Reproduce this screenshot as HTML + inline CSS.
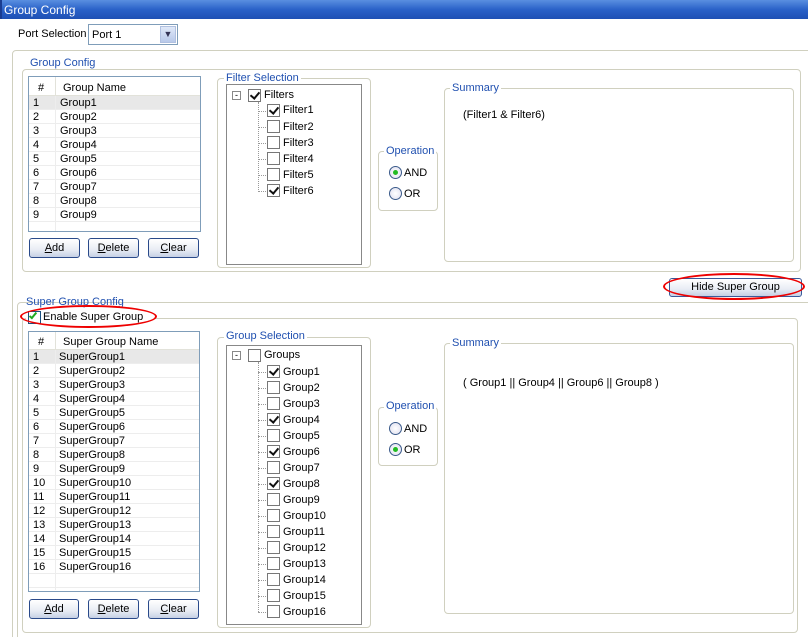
<!DOCTYPE html><html><head><style>
*{box-sizing:border-box;margin:0;padding:0}
html,body{width:808px;height:637px;overflow:hidden}
body{background:#fff;font-family:"Liberation Sans",sans-serif;font-size:11px;color:#000;position:relative}
.a{position:absolute}
.fs{position:absolute;border:1px solid #d0d0bf;border-radius:4px}
.lg{position:absolute;background:#fff;color:#2050b0;padding:0 2px;font-size:11px;line-height:12px}
.tb{position:absolute;border:1px solid #7f9db9;background:#fff;overflow:hidden}
.hd{position:absolute;left:0;right:0;top:0;background:#fff;border-bottom:1px solid #e2e2da}
.row{position:absolute;left:0;right:0;height:14px;line-height:15px;border-bottom:1px solid #ededed}
.row span{position:absolute}
.btn{position:absolute;height:20px;border:1px solid #2a4a8a;border-radius:3px;background:linear-gradient(#fff,#e8ecf4 60%,#c6d0e4);text-align:center;line-height:19px}
.cb{position:absolute;width:13px;height:13px;border:1px solid #777;background:#fff}
.cb.c::after{content:"";position:absolute;left:3px;top:0px;width:4px;height:7px;border:solid #111;border-width:0 2px 2px 0;transform:rotate(40deg)}
.ti{position:absolute;line-height:15px}
.dot{position:absolute;border-left:1px dotted #999}
.hdot{position:absolute;border-top:1px dotted #999;width:8px}
.rd{position:absolute;width:13px;height:13px;border-radius:50%;border:1px solid #3a5a8a;background:radial-gradient(#fff,#dde)}
.rd.s::after{content:"";position:absolute;left:3px;top:3px;width:5px;height:5px;border-radius:50%;background:#2b2}
.ell{position:absolute;border:2px solid #e00;border-radius:50%}
</style></head><body>
<div class="a" style="left:0;top:0;width:808px;height:19px;background:linear-gradient(#5a8fe0,#2a62c8 50%,#1e50b4);border-left:2px solid #1a3c90"></div>
<div class="a" style="left:4px;top:3px;color:#fff;font-size:12px">Group Config</div>
<div class="a" style="left:18px;top:28px">Port Selection</div>
<div class="a" style="left:88px;top:24px;width:90px;height:21px;border:1px solid #7f9db9;background:#fff"><span class="a" style="left:3px;top:4px">Port 1</span><div class="a" style="right:1px;top:1px;width:16px;height:17px;background:linear-gradient(#dfe8f8,#b8c9ea);border:1px solid #b0c0e0;text-align:center;font-size:9px;line-height:15px;color:#335">&#9660;</div></div>

<div class="fs" style="left:12px;top:50px;width:800px;height:600px"></div>
<div class="fs" style="left:22px;top:69px;width:779px;height:203px"></div>
<div class="lg" style="left:28px;top:57px">Group Config</div>

<div class="tb" style="left:28px;top:76px;width:173px;height:156px">
<div class="hd" style="height:19px"><span class="a" style="left:9px;top:5px">#</span><span class="a" style="left:26px;top:0;height:18px;border-left:1px solid #e2e2da"></span><span class="a" style="left:34px;top:5px">Group Name</span></div>
<div class="row" style="top:19px;background:#e8e8e8"><span style="left:4px">1</span><span style="left:31px">Group1</span></div>
<div class="row" style="top:33px"><span style="left:4px">2</span><span style="left:31px">Group2</span></div>
<div class="row" style="top:47px"><span style="left:4px">3</span><span style="left:31px">Group3</span></div>
<div class="row" style="top:61px"><span style="left:4px">4</span><span style="left:31px">Group4</span></div>
<div class="row" style="top:75px"><span style="left:4px">5</span><span style="left:31px">Group5</span></div>
<div class="row" style="top:89px"><span style="left:4px">6</span><span style="left:31px">Group6</span></div>
<div class="row" style="top:103px"><span style="left:4px">7</span><span style="left:31px">Group7</span></div>
<div class="row" style="top:117px"><span style="left:4px">8</span><span style="left:31px">Group8</span></div>
<div class="row" style="top:131px"><span style="left:4px">9</span><span style="left:31px">Group9</span></div>
<div class="a" style="left:26px;top:19px;height:140px;border-left:1px solid #ededed"></div>
</div>
<div class="btn" style="left:29px;top:238px;width:51px"><u>A</u>dd</div>
<div class="btn" style="left:88px;top:238px;width:51px"><u>D</u>elete</div>
<div class="btn" style="left:148px;top:238px;width:51px"><u>C</u>lear</div>

<div class="fs" style="left:217px;top:78px;width:154px;height:190px"></div>
<div class="lg" style="left:224px;top:72px">Filter Selection</div>
<div class="tb" style="left:226px;top:84px;width:136px;height:181px;border-color:#888">
<div class="a" style="left:5px;top:6px;width:9px;height:9px;border:1px solid #888;font-size:9px;line-height:6px;text-align:center">-</div>
<div class="cb c" style="left:21px;top:4px"></div><div class="ti" style="left:37px;top:3px">Filters</div>
<div class="dot" style="left:31px;top:17px;height:90px"></div>
<div class="hdot" style="left:31px;top:26px"></div><div class="cb c" style="left:40px;top:19px"></div><div class="ti" style="left:56px;top:18px">Filter1</div>
<div class="hdot" style="left:31px;top:42px"></div><div class="cb" style="left:40px;top:35px"></div><div class="ti" style="left:56px;top:35px">Filter2</div>
<div class="hdot" style="left:31px;top:58px"></div><div class="cb" style="left:40px;top:51px"></div><div class="ti" style="left:56px;top:51px">Filter3</div>
<div class="hdot" style="left:31px;top:74px"></div><div class="cb" style="left:40px;top:67px"></div><div class="ti" style="left:56px;top:67px">Filter4</div>
<div class="hdot" style="left:31px;top:90px"></div><div class="cb" style="left:40px;top:83px"></div><div class="ti" style="left:56px;top:83px">Filter5</div>
<div class="hdot" style="left:31px;top:106px"></div><div class="cb c" style="left:40px;top:99px"></div><div class="ti" style="left:56px;top:99px">Filter6</div>
</div>

<div class="fs" style="left:378px;top:151px;width:60px;height:60px"></div>
<div class="lg" style="left:384px;top:145px">Operation</div>
<div class="rd s" style="left:389px;top:166px"></div><div class="a" style="left:404px;top:167px">AND</div>
<div class="rd" style="left:389px;top:187px"></div><div class="a" style="left:404px;top:188px">OR</div>

<div class="fs" style="left:444px;top:88px;width:350px;height:174px"></div>
<div class="lg" style="left:450px;top:82px">Summary</div>
<div class="a" style="left:463px;top:109px">(Filter1 &amp; Filter6)</div>

<div class="btn" style="left:669px;top:278px;width:133px;height:19px;line-height:17px;border-color:#3a5a9a">Hide Super Group</div>
<div class="ell" style="left:663px;top:273px;width:142px;height:27px"></div>

<div class="fs" style="left:17px;top:302px;width:795px;height:340px"></div>
<div class="lg" style="left:24px;top:296px;background:transparent">Super Group Config</div>
<div class="fs" style="left:22px;top:318px;width:776px;height:315px"></div>
<div class="a" style="left:26px;top:308px;width:128px;height:16px;background:#fff"></div>
<div class="a" style="left:28px;top:311px;width:13px;height:13px;border:1px solid #1c5180;background:#fff"></div>
<div class="a" style="left:31px;top:311px;width:4px;height:8px;border:solid #2a2;border-width:0 2px 2px 0;transform:rotate(40deg)"></div>
<div class="a" style="left:43px;top:311px">Enable Super Group</div>
<div class="ell" style="left:20px;top:305px;width:137px;height:23px"></div>

<div class="tb" style="left:28px;top:331px;width:172px;height:261px">
<div class="hd" style="height:18px"><span class="a" style="left:9px;top:4px">#</span><span class="a" style="left:26px;top:0;height:17px;border-left:1px solid #e2e2da"></span><span class="a" style="left:34px;top:4px">Super Group Name</span></div>
<div class="row" style="top:18px;background:#e8e8e8"><span style="left:4px">1</span><span style="left:30px">SuperGroup1</span></div>
<div class="row" style="top:32px"><span style="left:4px">2</span><span style="left:30px">SuperGroup2</span></div>
<div class="row" style="top:46px"><span style="left:4px">3</span><span style="left:30px">SuperGroup3</span></div>
<div class="row" style="top:60px"><span style="left:4px">4</span><span style="left:30px">SuperGroup4</span></div>
<div class="row" style="top:74px"><span style="left:4px">5</span><span style="left:30px">SuperGroup5</span></div>
<div class="row" style="top:88px"><span style="left:4px">6</span><span style="left:30px">SuperGroup6</span></div>
<div class="row" style="top:102px"><span style="left:4px">7</span><span style="left:30px">SuperGroup7</span></div>
<div class="row" style="top:116px"><span style="left:4px">8</span><span style="left:30px">SuperGroup8</span></div>
<div class="row" style="top:130px"><span style="left:4px">9</span><span style="left:30px">SuperGroup9</span></div>
<div class="row" style="top:144px"><span style="left:4px">10</span><span style="left:30px">SuperGroup10</span></div>
<div class="row" style="top:158px"><span style="left:4px">11</span><span style="left:30px">SuperGroup11</span></div>
<div class="row" style="top:172px"><span style="left:4px">12</span><span style="left:30px">SuperGroup12</span></div>
<div class="row" style="top:186px"><span style="left:4px">13</span><span style="left:30px">SuperGroup13</span></div>
<div class="row" style="top:200px"><span style="left:4px">14</span><span style="left:30px">SuperGroup14</span></div>
<div class="row" style="top:214px"><span style="left:4px">15</span><span style="left:30px">SuperGroup15</span></div>
<div class="row" style="top:228px"><span style="left:4px">16</span><span style="left:30px">SuperGroup16</span></div>
<div class="row" style="top:242px"></div>
<div class="a" style="left:26px;top:18px;height:240px;border-left:1px solid #ededed"></div>
</div>
<div class="btn" style="left:29px;top:599px;width:50px"><u>A</u>dd</div>
<div class="btn" style="left:88px;top:599px;width:51px"><u>D</u>elete</div>
<div class="btn" style="left:148px;top:599px;width:51px"><u>C</u>lear</div>

<div class="fs" style="left:217px;top:337px;width:154px;height:291px"></div>
<div class="lg" style="left:224px;top:330px">Group Selection</div>
<div class="tb" style="left:226px;top:345px;width:136px;height:280px;border-color:#888">
<div class="a" style="left:5px;top:5px;width:9px;height:9px;border:1px solid #888;font-size:9px;line-height:6px;text-align:center">-</div>
<div class="cb" style="left:21px;top:3px"></div><div class="ti" style="left:37px;top:2px">Groups</div>
<div class="dot" style="left:31px;top:16px;height:250px"></div>
<div class="hdot" style="left:31px;top:26px"></div><div class="cb c" style="left:40px;top:19px"></div><div class="ti" style="left:56px;top:19px">Group1</div>
<div class="hdot" style="left:31px;top:42px"></div><div class="cb" style="left:40px;top:35px"></div><div class="ti" style="left:56px;top:35px">Group2</div>
<div class="hdot" style="left:31px;top:58px"></div><div class="cb" style="left:40px;top:51px"></div><div class="ti" style="left:56px;top:51px">Group3</div>
<div class="hdot" style="left:31px;top:74px"></div><div class="cb c" style="left:40px;top:67px"></div><div class="ti" style="left:56px;top:67px">Group4</div>
<div class="hdot" style="left:31px;top:90px"></div><div class="cb" style="left:40px;top:83px"></div><div class="ti" style="left:56px;top:83px">Group5</div>
<div class="hdot" style="left:31px;top:106px"></div><div class="cb c" style="left:40px;top:99px"></div><div class="ti" style="left:56px;top:99px">Group6</div>
<div class="hdot" style="left:31px;top:122px"></div><div class="cb" style="left:40px;top:115px"></div><div class="ti" style="left:56px;top:115px">Group7</div>
<div class="hdot" style="left:31px;top:138px"></div><div class="cb c" style="left:40px;top:131px"></div><div class="ti" style="left:56px;top:131px">Group8</div>
<div class="hdot" style="left:31px;top:154px"></div><div class="cb" style="left:40px;top:147px"></div><div class="ti" style="left:56px;top:147px">Group9</div>
<div class="hdot" style="left:31px;top:170px"></div><div class="cb" style="left:40px;top:163px"></div><div class="ti" style="left:56px;top:163px">Group10</div>
<div class="hdot" style="left:31px;top:186px"></div><div class="cb" style="left:40px;top:179px"></div><div class="ti" style="left:56px;top:179px">Group11</div>
<div class="hdot" style="left:31px;top:202px"></div><div class="cb" style="left:40px;top:195px"></div><div class="ti" style="left:56px;top:195px">Group12</div>
<div class="hdot" style="left:31px;top:218px"></div><div class="cb" style="left:40px;top:211px"></div><div class="ti" style="left:56px;top:211px">Group13</div>
<div class="hdot" style="left:31px;top:234px"></div><div class="cb" style="left:40px;top:227px"></div><div class="ti" style="left:56px;top:227px">Group14</div>
<div class="hdot" style="left:31px;top:250px"></div><div class="cb" style="left:40px;top:243px"></div><div class="ti" style="left:56px;top:243px">Group15</div>
<div class="hdot" style="left:31px;top:266px"></div><div class="cb" style="left:40px;top:259px"></div><div class="ti" style="left:56px;top:259px">Group16</div>
</div>

<div class="fs" style="left:378px;top:407px;width:60px;height:59px"></div>
<div class="lg" style="left:384px;top:400px">Operation</div>
<div class="rd" style="left:389px;top:422px"></div><div class="a" style="left:404px;top:423px">AND</div>
<div class="rd s" style="left:389px;top:443px"></div><div class="a" style="left:404px;top:444px">OR</div>

<div class="fs" style="left:444px;top:343px;width:350px;height:271px"></div>
<div class="lg" style="left:450px;top:337px">Summary</div>
<div class="a" style="left:463px;top:377px">( Group1 || Group4 || Group6 || Group8 )</div>
</body></html>
